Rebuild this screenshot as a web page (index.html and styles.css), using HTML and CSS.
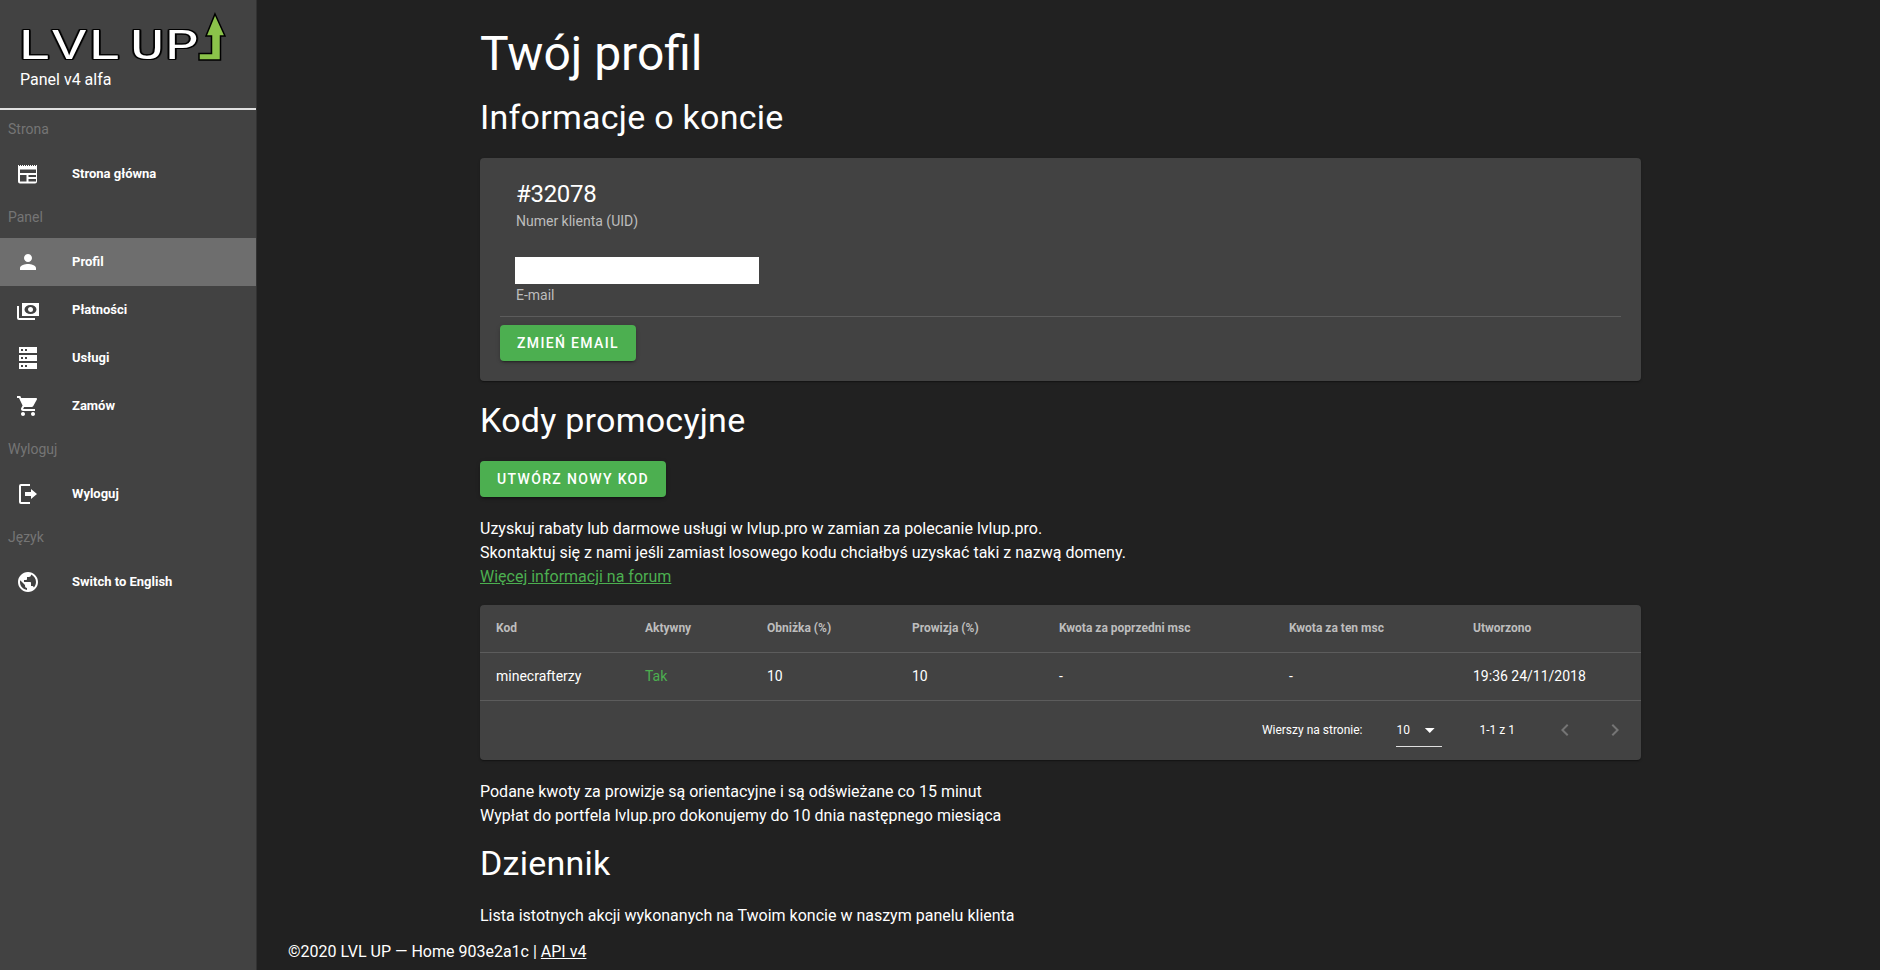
FILE: index.html
```html
<!DOCTYPE html>
<html lang="pl">
<head>
  <meta charset="UTF-8" />
  <title>Twój profil</title>
  <link rel="stylesheet" href="styles.css">
</head>
<body>
  <div class="app">
    <aside class="sidebar">
      <div class="brand">
        <svg class="logo" width="240" height="65" viewBox="0 0 240 65">
          <text class="logo-text" x="13 40 67 100 127" y="59" transform="scale(1.3 1)">LVLUP</text>
          <polygon class="logo-arrow" points="215,14 225,36 220.500,36 220.500,60 199,60 199,53.500 211.500,53.500 211.500,36 206,36"/>
        </svg>
        <div class="brand-sub">Panel v4 alfa</div>
      </div>
      <hr class="brand-line">

      <div class="nav-head">Strona</div>
      <a class="nav-item">
        <svg class="nav-icon" viewBox="0 0 24 24"><path d="M2 3h1v1h1V3h1v1h1V3h1v1h1V3h1v1h1V3h1v1h1V3h1v1h1V3h1v1h1V3h1v1h1V3h1v1h1V3h1v16.500a2 2 0 0 1-2 2H4a2 2 0 0 1-2-2V3zm2 4.500V11h16V7.500H4zm0 5.500v6.500h6.500V13H4zm8.500 0v2h7.500v-2h-7.500zm0 4v2.500h7.500V17h-7.500z"/></svg>
        <span>Strona główna</span>
      </a>

      <div class="nav-head">Panel</div>
      <a class="nav-item active">
        <svg class="nav-icon" viewBox="0 0 24 24"><path d="M12 12c2.210 0 4-1.790 4-4s-1.790-4-4-4-4 1.790-4 4 1.790 4 4 4zm0 2c-2.670 0-8 1.340-8 4v2h16v-2c0-2.660-5.330-4-8-4z"/></svg>
        <span>Profil</span>
      </a>
      <a class="nav-item">
        <svg class="nav-icon" viewBox="0 0 24 24"><path fill-rule="evenodd" d="M6 5h17v13H6V5zm2.500 6.500a6 4.500 0 1 0 12 0a6 4.500 0 1 0-12 0zm6-2.500a2.500 2.500 0 1 1 0 5a2.500 2.500 0 0 1 0-5zM1 8h2v12h16v2H3a2 2 0 0 1-2-2V8z"/></svg>
        <span>Płatności</span>
      </a>
      <a class="nav-item">
        <svg class="nav-icon" viewBox="0 0 24 24"><path fill-rule="evenodd" d="M3 1h18v6H3V1zm2 2v2h2V3H5zm4 0v2h2V3H9zM3 9h18v6H3V9zm2 2v2h2v-2H5zm4 0v2h2v-2H9zM3 17h18v6H3v-6zm2 2v2h2v-2H5zm4 0v2h2v-2H9z"/></svg>
        <span>Usługi</span>
      </a>
      <a class="nav-item">
        <svg class="nav-icon" viewBox="0 0 24 24"><path d="M7 18c-1.100 0-1.990.9-1.990 2S5.900 22 7 22s2-.9 2-2-.9-2-2-2zM1 2v2h2l3.600 7.590-1.350 2.450c-.16.280-.25.610-.25.960 0 1.100.9 2 2 2h12v-2H7.420c-.14 0-.25-.11-.25-.25l.03-.12.9-1.630h7.450c.75 0 1.410-.41 1.750-1.030l3.580-6.490c.08-.14.120-.31.120-.48 0-.55-.45-1-1-1H5.210l-.94-2H1zm16 16c-1.100 0-1.990.9-1.990 2s.89 2 1.990 2 2-.9 2-2-.9-2-2-2z"/></svg>
        <span>Zamów</span>
      </a>

      <div class="nav-head">Wyloguj</div>
      <a class="nav-item">
        <svg class="nav-icon" viewBox="0 0 24 24"><path d="M5 2h9v2H5v16h9v2H5a2 2 0 0 1-2-2V4a2 2 0 0 1 2-2zm10 5l6 5-6 5v-3H9v-4h6V7z"/></svg>
        <span>Wyloguj</span>
      </a>

      <div class="nav-head">Język</div>
      <a class="nav-item">
        <svg class="nav-icon" viewBox="0 0 24 24"><path d="M12 2C6.480 2 2 6.480 2 12s4.480 10 10 10 10-4.480 10-10S17.520 2 12 2zm-1 17.930c-3.950-.49-7-3.850-7-7.930 0-.62.08-1.210.21-1.790L9 15v1c0 1.100.9 2 2 2v1.930zm6.900-2.540c-.26-.81-1-1.390-1.900-1.390h-1v-3c0-.55-.45-1-1-1H8v-2h2c.55 0 1-.45 1-1V7h2c1.100 0 2-.9 2-2v-.41c2.930 1.190 5 4.060 5 7.410 0 2.080-.8 3.970-2.100 5.390z"/></svg>
        <span>Switch to English</span>
      </a>
    </aside>

    <main class="content">
      <div class="page">
        <h1>Twój profil</h1>
        <h2 class="first">Informacje o koncie</h2>

        <section class="card account">
          <div class="account-info">
            <div class="uid">#32078</div>
            <div class="caption">Numer klienta (UID)</div>
            <div class="email-mask"></div>
            <div class="caption">E-mail</div>
          </div>
          <div class="account-actions">
            <button class="btn">Zmień email</button>
          </div>
        </section>

        <h2 class="promo-title">Kody promocyjne</h2>
        <button class="btn">Utwórz nowy kod</button>
        <p class="promo-text">
          Uzyskuj rabaty lub darmowe usługi w lvlup.pro w zamian za polecanie lvlup.pro.<br>
          Skontaktuj się z nami jeśli zamiast losowego kodu chciałbyś uzyskać taki z nazwą domeny.<br>
          <a class="forum-link">Więcej informacji na forum</a>
        </p>

        <section class="card table-card">
          <table>
            <tr>
              <th class="col-kod">Kod</th>
              <th class="col-act">Aktywny</th>
              <th class="col-obn">Obniżka (%)</th>
              <th class="col-pro">Prowizja (%)</th>
              <th class="col-prev">Kwota za poprzedni msc</th>
              <th class="col-cur">Kwota za ten msc</th>
              <th>Utworzono</th>
            </tr>
            <tr>
              <td>minecrafterzy</td>
              <td class="yes">Tak</td>
              <td>10</td>
              <td>10</td>
              <td>-</td>
              <td>-</td>
              <td>19:36 24/11/2018</td>
            </tr>
          </table>
          <div class="pager">
            <span class="pager-label">Wierszy na stronie:</span>
            <span class="pager-select">10
              <svg class="caret" viewBox="0 0 24 24"><path d="M7 10l5 5 5-5z"/></svg>
            </span>
            <span class="pager-count">1-1 z 1</span>
            <svg class="pager-arrow" viewBox="0 0 24 24"><path d="M15.410 7.410L14 6l-6 6 6 6 1.410-1.410L10.830 12z"/></svg>
            <svg class="pager-arrow" viewBox="0 0 24 24"><path d="M10 6L8.590 7.410 13.170 12l-4.580 4.590L10 18l6-6z"/></svg>
          </div>
        </section>

        <p class="note">
          Podane kwoty za prowizje są orientacyjne i są odświeżane co 15 minut<br>
          Wypłat do portfela lvlup.pro dokonujemy do 10 dnia następnego miesiąca
        </p>

        <h2 class="log-title">Dziennik</h2>
        <p class="log-text">Lista istotnych akcji wykonanych na Twoim koncie w naszym panelu klienta</p>
      </div>
      <footer class="footer">©2020 LVL UP — Home 903e2a1c | <a>API v4</a></footer>
    </main>
  </div>
</body>
</html>
```

FILE: styles.css
```css
* {
  box-sizing: border-box;
}
html, body {
  height: 100%;
}
body {
  margin: 0;
  overflow: hidden;
  background: #212121;
  color: #fff;
  font-family: Roboto, "Liberation Sans", sans-serif;
  font-size: 16px;
}
.app {
  display: flex;
  height: 970px;
}

/* sidebar */
.sidebar {
  width: 257px;
  flex: none;
  background: #424242;
  border-right: 1px solid #323232;
}
.brand {
  height: 108px;
}
.logo {
  display: block;
  overflow: visible;
}
.logo-text {
  font-family: "Liberation Mono", monospace;
  font-size: 44px;
  fill: #fff;
  filter: drop-shadow(1px 0 0 #000) drop-shadow(-1px 0 0 #000) drop-shadow(0 1px 0 #000) drop-shadow(0 -1px 0 #000);
}
.logo-arrow {
  fill: #8bc34a;
  stroke: #000;
  stroke-width: 1.500px;
}
.brand-sub {
  margin: 5px 0 0 20px;
  font-size: 16px;
  line-height: 20px;
  color: #fff;
}
.brand-line {
  margin: 0;
  border: none;
  height: 2px;
  background: #e0e0e0;
}
.nav-head {
  height: 40px;
  padding: 0 8px;
  font-size: 14px;
  line-height: 39px;
  color: #757575;
}
.nav-item {
  display: flex;
  align-items: center;
  height: 48px;
  padding-left: 16px;
  font-size: 13px;
  font-weight: 700;
  color: #fff;
}
.nav-item span {
  margin-bottom: 2px;
}
.nav-item.active {
  background: #6e6e6e;
}
.nav-icon {
  width: 24px;
  height: 24px;
  fill: #fff;
  margin-right: 32px;
  flex: none;
}

/* main */
.content {
  flex: 1;
  position: relative;
  min-width: 0;
}
.page {
  width: 1161px;
  margin-left: 223px;
}
h1 {
  margin: 0;
  padding-top: 22px;
  font-size: 48px;
  line-height: 63px;
  font-weight: 400;
}
h2 {
  margin: 0;
  font-size: 34px;
  line-height: 40px;
  font-weight: 400;
  letter-spacing: .25px;
}
.first {
  margin-top: 12px;
}
.card {
  background: #424242;
  border-radius: 4px;
  box-shadow: 0 2px 1px -1px rgba(0,0,0,.2), 0 1px 1px rgba(0,0,0,.14), 0 1px 3px rgba(0,0,0,.12);
}
.account {
  margin-top: 21px;
  height: 223px;
  padding: 20px 20px 0;
}
.account-info {
  padding: 1px 16px 0;
  height: 139px;
  border-bottom: 1px solid #5c5c5c;
}
.uid {
  font-size: 24px;
  line-height: 30px;
  letter-spacing: -.3px;
  margin-bottom: 2px;
}
.caption {
  font-size: 14px;
  line-height: 20px;
  color: #bdbdbd;
}
.email-mask {
  width: 244px;
  height: 27px;
  margin: 26px 0 1px -1px;
  background: #fff;
}
.account-actions {
  padding-top: 8px;
}
.btn {
  display: block;
  height: 36px;
  padding: 0 17px;
  border: none;
  border-radius: 4px;
  background: #4caf50;
  color: #fff;
  font-family: inherit;
  font-size: 14px;
  font-weight: 500;
  letter-spacing: 1.350px;
  text-transform: uppercase;
  box-shadow: 0 3px 1px -2px rgba(0,0,0,.2), 0 2px 2px rgba(0,0,0,.14), 0 1px 5px rgba(0,0,0,.12);
}
.promo-title {
  margin-top: 19px;
  margin-bottom: 21px;
}
.promo-text {
  margin: 20px 0 0;
  line-height: 24px;
}
.forum-link {
  color: #4caf50;
  text-decoration: underline;
}
.table-card {
  margin-top: 16px;
}
table {
  width: 100%;
  border-collapse: collapse;
}
th, td {
  padding: 0 16px;
  text-align: left;
  border-bottom: 1px solid #5c5c5c;
}
th {
  height: 47px;
  font-size: 12px;
  font-weight: 700;
  color: #bdbdbd;
}
td {
  height: 48px;
  font-size: 14px;
}
.col-kod { width: 149px; }
.col-act { width: 122px; }
.col-obn { width: 145px; }
.col-pro { width: 147px; }
.col-prev { width: 230px; }
.col-cur { width: 184px; }
.yes {
  color: #4caf50;
}
.pager {
  display: flex;
  align-items: center;
  justify-content: flex-end;
  height: 59px;
  font-size: 12px;
  padding-right: 14px;
}
.pager-label {
  margin-right: 33px;
}
.pager-select {
  display: flex;
  align-items: center;
  width: 46px;
  height: 31px;
  padding: 0 0 3px 1px;
  border-bottom: 1px solid #e0e0e0;
  margin-top: 3px;
}
.caret {
  width: 24px;
  height: 24px;
  fill: #fff;
  margin-left: 8px;
}
.pager-count {
  margin-left: 38px;
  margin-right: 38px;
}
.pager-arrow {
  width: 24px;
  height: 24px;
  fill: #757575;
  margin-left: 26px;
}
.pager-count + .pager-arrow {
  margin-left: 0;
}
.note {
  margin: 20px 0 0;
  line-height: 24px;
}
.log-title {
  margin-top: 15px;
}
.log-text {
  margin: 21px 0 0;
  line-height: 24px;
}
.footer {
  position: absolute;
  left: 31px;
  bottom: 6px;
  line-height: 24px;
}
.footer a {
  text-decoration: underline;
}
```
